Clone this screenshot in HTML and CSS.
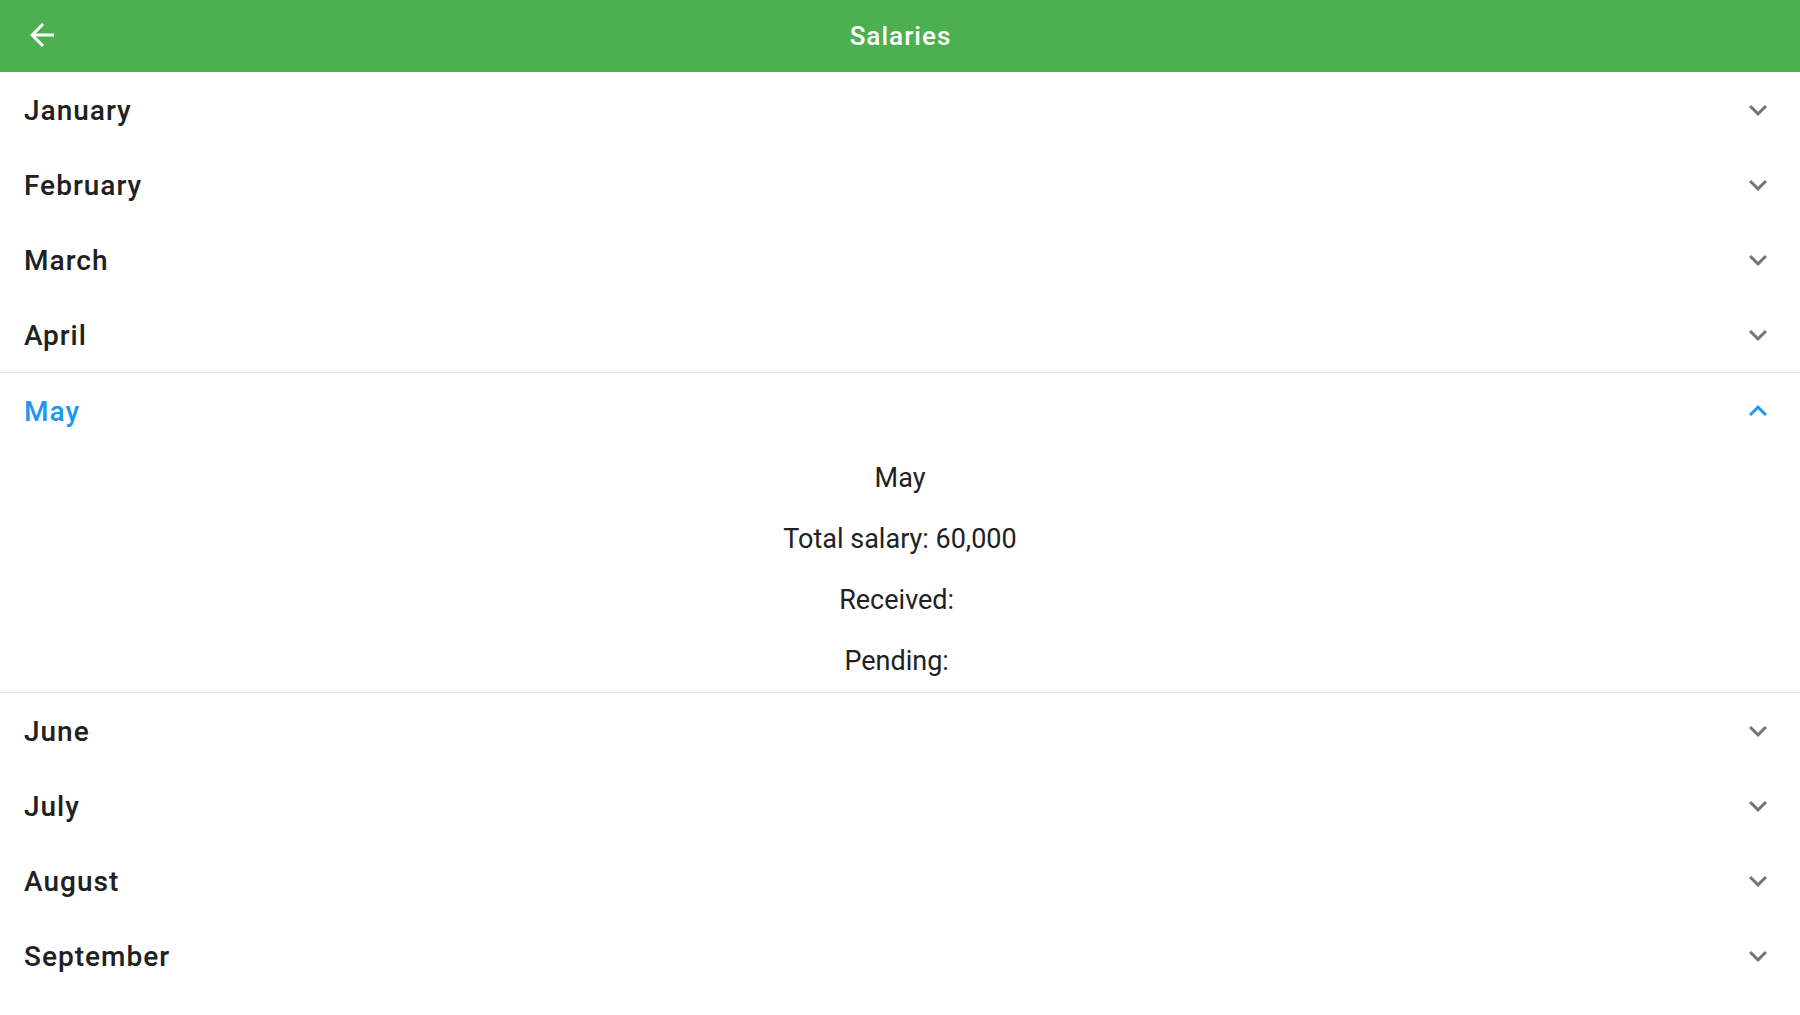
FILE: index.html
```html
<!DOCTYPE html>
<html>
<head>
<meta charset="utf-8">
<title>Salaries</title>
<link rel="stylesheet" href="styles.css">
</head>
<body>
<header class="appbar">
  <button class="back" aria-label="Back">
    <svg viewBox="0 0 24 24" width="36" height="36"><path fill="#fff" d="M20 11H7.83l5.59-5.59L12 4l-8 8 8 8 1.41-1.41L7.83 13H20v-2z"/></svg>
  </button>
  <h1 class="title">Salaries</h1>
</header>
<main class="list">
  <div class="tile"><span class="label">January</span><svg class="chev" viewBox="0 0 24 24"><path d="M16.59 8.59L12 13.17 7.41 8.59 6 10l6 6 6-6z"/></svg></div>
  <div class="tile"><span class="label">February</span><svg class="chev" viewBox="0 0 24 24"><path d="M16.59 8.59L12 13.17 7.41 8.59 6 10l6 6 6-6z"/></svg></div>
  <div class="tile"><span class="label">March</span><svg class="chev" viewBox="0 0 24 24"><path d="M16.59 8.59L12 13.17 7.41 8.59 6 10l6 6 6-6z"/></svg></div>
  <div class="tile"><span class="label">April</span><svg class="chev" viewBox="0 0 24 24"><path d="M16.59 8.59L12 13.17 7.41 8.59 6 10l6 6 6-6z"/></svg></div>
  <section class="expanded">
    <div class="tile open"><span class="label">May</span><svg class="chev" viewBox="0 0 24 24"><path d="M12 8l-6 6 1.41 1.41L12 10.83l4.59 4.58L18 14z"/></svg></div>
    <div class="details">
      <p class="line">May</p>
      <p class="line">Total salary: 60,000</p>
      <p class="line">Received: </p>
      <p class="line">Pending: </p>
    </div>
  </section>
  <div class="tile"><span class="label">June</span><svg class="chev" viewBox="0 0 24 24"><path d="M16.59 8.59L12 13.17 7.41 8.59 6 10l6 6 6-6z"/></svg></div>
  <div class="tile"><span class="label">July</span><svg class="chev" viewBox="0 0 24 24"><path d="M16.59 8.59L12 13.17 7.41 8.59 6 10l6 6 6-6z"/></svg></div>
  <div class="tile"><span class="label">August</span><svg class="chev" viewBox="0 0 24 24"><path d="M16.59 8.59L12 13.17 7.41 8.59 6 10l6 6 6-6z"/></svg></div>
  <div class="tile"><span class="label">September</span><svg class="chev" viewBox="0 0 24 24"><path d="M16.59 8.59L12 13.17 7.41 8.59 6 10l6 6 6-6z"/></svg></div>
</main>
</body>
</html>
```
FILE: styles.css
```css
html, body {
  margin: 0;
  padding: 0;
  background: #fff;
  font-family: Roboto, "Noto Sans", "Liberation Sans", sans-serif;
  color: #212121;
  overflow: hidden;
}
.appbar {
  height: 72px;
  background: #4caf50;
  display: flex;
  align-items: center;
  justify-content: center;
  position: relative;
}
.back {
  position: absolute;
  left: 24px;
  top: 17px;
  width: 36px;
  height: 36px;
  padding: 0;
  border: 0;
  background: none;
  display: flex;
}
.title {
  margin: 0 0 0 1px;
  color: #fff;
  font-family: "Roboto Medium", Roboto, sans-serif;
  font-size: 26px;
  font-weight: 500;
  letter-spacing: 1px;
}
.list {
  display: flex;
  flex-direction: column;
}
.tile {
  height: 75px;
  display: flex;
  align-items: center;
  justify-content: space-between;
  padding: 0 24px 0 24px;
}
.label {
  font-family: "Roboto Medium", Roboto, sans-serif;
  font-size: 28px;
  font-weight: 500;
  letter-spacing: 1px;
  color: #212121;
  padding-top: 2px;
}
.chev {
  width: 36px;
  height: 36px;
  fill: #757575;
}
.expanded {
  border-top: 1px solid #e0e0e0;
  border-bottom: 1px solid #e0e0e0;
}
.open .label { color: #2196f3; }
.open .chev { fill: #2196f3; }
.details {
  display: flex;
  flex-direction: column;
  align-items: center;
}
.line {
  margin: 0;
  height: 61px;
  line-height: 61px;
  font-size: 27px;
  font-weight: 400;
  color: #212121;
  white-space: pre;
}
```
